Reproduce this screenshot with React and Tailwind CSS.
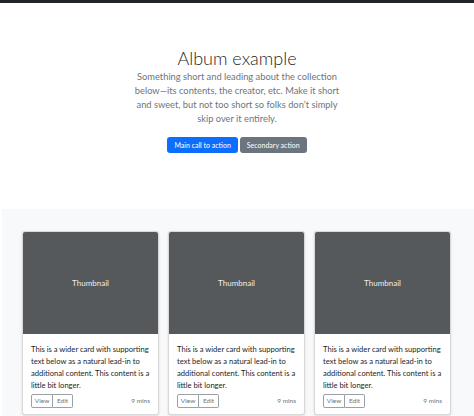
import React from 'react';

const cards = [1, 2, 3];

const AlbumCard = () => (
    <div className="bg-white border border-black/15 rounded-[3px] shadow-sm overflow-hidden">
        <div className="h-[102px] bg-[#55595c] flex items-center justify-center text-[8px] text-[#eceeef]">
            Thumbnail
        </div>
        <div className="px-[8px] pt-[9px] pb-[6px]">
            <p className="text-[7.6px] leading-[12px] text-[#212529]">
                This is a wider card with supporting text below as a natural lead-in to additional content. This content is a little bit longer.
            </p>
            <div className="mt-[3px] flex items-center justify-between">
                <div className="flex text-[6.5px] text-[#6c757d]">
                    <button className="h-[14px] w-[22px] border border-[#9aa0a6] rounded-l-[2px] flex items-center justify-center">View</button>
                    <button className="h-[14px] w-[20px] border border-l-0 border-[#9aa0a6] rounded-r-[2px] flex items-center justify-center">Edit</button>
                </div>
                <small className="text-[6.5px] text-[#6c757d]">9 mins</small>
            </div>
        </div>
    </div>
);

export default function App() {
    return (
        <div className="w-[474px] h-[416px] overflow-hidden bg-white" style={{ fontFamily: 'Lato, "Noto Sans", sans-serif' }}>
            <div className="h-[3px] bg-[#212529]" />

            <section className="pt-[44px] pb-[56px] text-center">
                <h1 className="text-[18px] leading-[23px] font-light text-[#212529]">Album example</h1>
                <p className="mx-auto w-[206px] text-[9.3px] leading-[14px] text-[#6c757d]">
                    Something short and leading about the collection below—its contents, the creator, etc. Make it short and sweet, but not too short so folks don’t simply skip over it entirely.
                </p>
                <div className="mt-[11px] flex justify-center gap-[2px]">
                    <button className="h-[16px] px-[7px] rounded-[3px] bg-[#0d6efd] text-white text-[7px]">Main call to action</button>
                    <button className="h-[16px] px-[7px] rounded-[3px] bg-[#6c757d] text-white text-[7px]">Secondary action</button>
                </div>
            </section>

            <section className="ml-[2px] bg-[#f8f9fa] pt-[22px] pb-[20px]">
                <div className="ml-[20px] w-[429px] grid grid-cols-3 gap-[9px]">
                    {cards.map((c) => (
                        <AlbumCard key={c} />
                    ))}
                </div>
            </section>
        </div>
    );
}
